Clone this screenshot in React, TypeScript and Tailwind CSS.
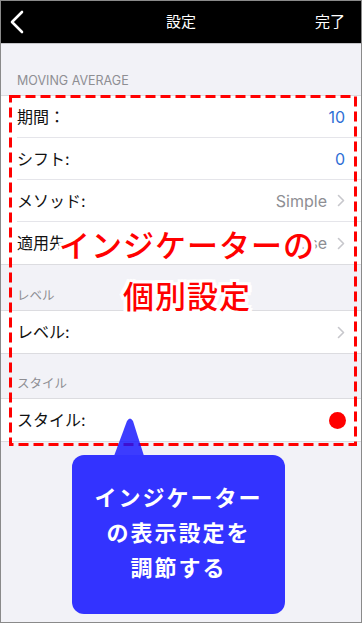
import React from 'react'

const font = { fontFamily: '"Inter", "Noto Sans CJK JP", sans-serif' }

function Chevron() {
  return (
    <svg width="8" height="13" viewBox="0 0 8 13" className="ml-[10px]">
      <path d="M1.5 1.5 L6.5 6.5 L1.5 11.5" fill="none" stroke="#c7c7cc" strokeWidth="1.6" strokeLinecap="round" strokeLinejoin="round" />
    </svg>
  )
}

function Row({ label, children, last }: { label: string; children?: React.ReactNode; last?: boolean }) {
  return (
    <div className="bg-white pl-[16px]">
      <div className={`h-[42px] flex items-center justify-between pr-[16px] ${last ? '' : 'border-b border-[#e5e5ea]'}`}>
        <span className="text-[16px] text-[#111]">{label}</span>
        <div className="flex items-center">{children}</div>
      </div>
    </div>
  )
}

function SectionTitle({ title, h }: { title: string; h: string }) {
  return (
    <div className={`${h} flex items-end pl-[16px] pb-[6px] text-[12.5px] leading-[16px] text-[#8e8e93]`}>{title}</div>
  )
}

export default function App() {
  return (
    <div style={font} className="relative w-[362px] h-[623px] overflow-hidden border border-[#8a8a8a] bg-[#f2f2f7]">
      {/* nav bar */}
      <header className="h-[43px] bg-black border-b border-[#c4c4c8] flex items-center justify-between px-[9px] relative">
        <svg width="16" height="24" viewBox="0 0 16 24">
          <path d="M12 2 L2 12 L12 22" fill="none" stroke="white" strokeWidth="2.6" strokeLinecap="round" strokeLinejoin="round" />
        </svg>
        <div className="absolute left-0 right-0 text-center text-white text-[15px] pointer-events-none">設定</div>
        <span className="text-white text-[15px] pr-[7px]">完了</span>
      </header>

      <SectionTitle title="MOVING AVERAGE" h="h-[51px]" />
      <div className="border-y border-[#dcdce0]">
        <Row label="期間：">
          <span className="text-[16px] text-[#2f6fd6]">10</span>
        </Row>
        <Row label="シフト:">
          <span className="text-[16px] text-[#2f6fd6]">0</span>
        </Row>
        <Row label="メソッド:">
          <span className="text-[16px] text-[#8e8e93]">Simple</span>
          <Chevron />
        </Row>
        <Row label="適用先" last>
          <span className="text-[16px] text-[#8e8e93]">Close</span>
          <Chevron />
        </Row>
      </div>

      <SectionTitle title="レベル" h="h-[45px]" />
      <div className="border-y border-[#dcdce0]">
        <Row label="レベル:" last>
          <Chevron />
        </Row>
      </div>

      <SectionTitle title="スタイル" h="h-[44px]" />
      <div className="border-y border-[#dcdce0]">
        <Row label="スタイル:" last>
          <span className="w-[17px] h-[17px] rounded-full bg-[#ff0000] -mr-[1px]" />
        </Row>
      </div>

      {/* annotation: dashed frame */}
      <svg className="absolute left-[8px] top-[94px]" width="348" height="351" viewBox="0 0 348 351">
        <rect x="1.5" y="1.5" width="345" height="348" fill="none" stroke="#ff0000" strokeWidth="3" strokeDasharray="10 5" />
      </svg>

      {/* annotation: red caption */}
      <div className="absolute left-[12px] right-0 top-[219px] flex flex-col items-center text-[31px] leading-[51px] font-medium text-[#ff0000] [text-shadow:0_0_2px_#fff,2px_0_0_#fff,-2px_0_0_#fff,0_2px_0_#fff,0_-2px_0_#fff,2px_2px_0_#fff,-2px_-2px_0_#fff,2px_-2px_0_#fff,-2px_2px_0_#fff,3px_0_0_#fff,-3px_0_0_#fff,0_3px_0_#fff,0_-3px_0_#fff,4px_0_0_#fff,-4px_0_0_#fff,3px_3px_0_#fff,-3px_3px_0_#fff,3px_-3px_0_#fff,-3px_-3px_0_#fff]">
        <span className="tracking-[1px]">インジケーターの</span>
        <span className="tracking-[1px]">個別設定</span>
      </div>

      {/* annotation: speech bubble */}
      <svg className="absolute left-[111px] top-[415px]" width="34" height="40" viewBox="0 0 34 40">
        <path d="M2 40 L15 5 Q18 0 21 5 L32 40 Z" fill="rgba(20,20,255,0.82)" />
      </svg>
      <div className="absolute left-[71px] top-[454px] w-[213px] h-[159px] rounded-[12px] bg-[#3333ff] flex flex-col items-center justify-center text-white font-bold text-[22px] leading-[35px] tracking-[2px] pb-[2px]">
        <span>インジケーター</span>
        <span>の表示設定を</span>
        <span>調節する</span>
      </div>
    </div>
  )
}
